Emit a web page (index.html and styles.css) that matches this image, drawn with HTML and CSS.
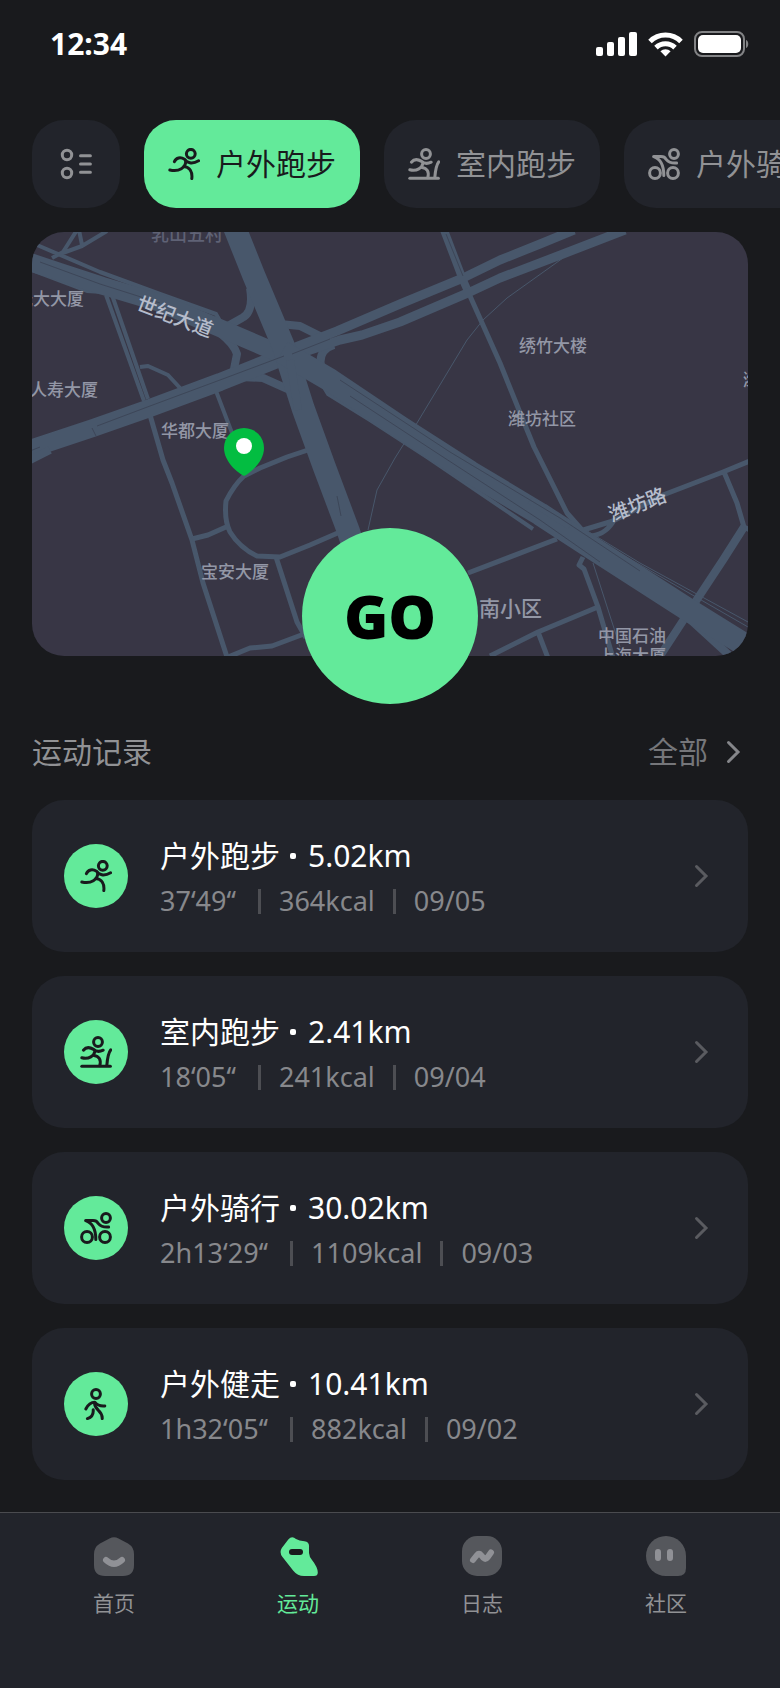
FILE: index.html
```html
<!DOCTYPE html>
<html lang="zh-CN">
<head>
<meta charset="utf-8">
<meta name="viewport" content="width=device-width, initial-scale=1">
<title>运动</title>
<link rel="stylesheet" href="styles.css">
</head>
<body>
<svg class="sprite" aria-hidden="true">
  <symbol id="i-run" viewBox="0 0 32 32">
    <circle cx="22.8" cy="5.8" r="4.4"/>
    <path d="M6.4 13.6C8.2 9.6 12.4 8.6 16.6 11.2C18.4 14.8 24 16.6 30.6 12.8"/>
    <path d="M17.8 13C17.6 19.6 11.4 24.2 1.8 22"/>
    <path d="M16 18.4C21.8 19.2 24.6 23.8 23.8 30.6"/>
  </symbol>
  <symbol id="i-treadmill" viewBox="0 0 32 32">
    <circle cx="18" cy="6" r="4.4"/>
    <path d="M3.4 14.2C6 11 10 11.2 13.6 13.4C16 15.6 19.8 15.8 23.2 14.2"/>
    <path d="M15 15C14.2 19.8 9 23.6 1.8 21.8"/>
    <path d="M14 19.4C19 20 21.4 23.8 19.8 29.6"/>
    <path d="M30.8 13.8C28.4 16.8 27.4 22 26.8 29.6"/>
    <path d="M1.8 30.2H30.4"/>
  </symbol>
  <symbol id="i-bike" viewBox="0 0 32 32">
    <circle cx="26" cy="6" r="4.4"/>
    <circle cx="7" cy="25" r="5.4"/>
    <circle cx="25" cy="25" r="5.4"/>
    <path d="M28.6 15C23.4 15.4 20.6 14.4 18.4 11.6C16.4 9 16 8.6 13 8.6H5.6C11.8 10.6 15.8 17 15.8 27.4"/>
  </symbol>
  <symbol id="i-walk" viewBox="0 0 32 32">
    <circle cx="16" cy="6" r="4.4"/>
    <path d="M5.8 21C8 16.6 11 14.2 14.8 14.2C17.4 17.6 20.4 18.4 24.8 18"/>
    <path d="M14.6 15.6C14.8 18.4 16.2 20.2 18.4 22.4C21.2 25 22.4 27 22.2 30.6"/>
    <path d="M13.2 21.8C13.6 26.4 11.6 29.4 7.4 30.6"/>
  </symbol>
  <symbol id="i-chevron" viewBox="0 0 24 24">
    <path d="M4.5 2.5L14 12L4.5 21.5"/>
  </symbol>
</svg>

<div class="app">
  <header class="status">
    <time class="clock">12:34</time>
    <div class="status-icons">
      <svg class="signal" viewBox="0 0 41 26" aria-hidden="true">
        <rect x="0" y="16" width="7" height="9" rx="2"/>
        <rect x="11" y="11" width="7" height="14" rx="2"/>
        <rect x="22" y="6" width="7" height="19" rx="2"/>
        <rect x="33" y="1" width="8" height="24" rx="2"/>
      </svg>
      <svg class="wifi" viewBox="0 0 35 26" aria-hidden="true">
        <path class="arc" d="M2 10.4A22 22 0 0 1 33 10.4"/>
        <path class="arc" d="M8 16.6A13.6 13.6 0 0 1 27 16.6"/>
        <path d="M17.5 25.6L12.4 20.2A7.5 7.5 0 0 1 22.6 20.2Z"/>
      </svg>
      <svg class="battery" viewBox="0 0 56 28" aria-hidden="true">
        <rect class="shell" x="1" y="2" width="49" height="24" rx="7"/>
        <rect x="4" y="5" width="43" height="18" rx="5"/>
        <path class="cap" d="M52 10C55 11 55 17 52 18Z"/>
      </svg>
    </div>
  </header>

  <nav class="tabs" aria-label="运动类型">
    <button class="tab tab-list" type="button" aria-label="全部类型">
      <svg class="icon" viewBox="0 0 32 32" aria-hidden="true">
        <circle cx="7" cy="7" r="4.7"/><circle cx="7" cy="25" r="4.7"/>
        <path d="M20.5 7.8H30.4M20.5 16H30.4M20.5 24.2H30.4"/>
      </svg>
    </button>
    <button class="tab tab-active" type="button"><svg class="icon" aria-hidden="true"><use href="#i-run"/></svg><span class="label">户外跑步</span></button>
    <button class="tab" type="button"><svg class="icon" aria-hidden="true"><use href="#i-treadmill"/></svg><span class="label">室内跑步</span></button>
    <button class="tab" type="button"><svg class="icon" aria-hidden="true"><use href="#i-bike"/></svg><span class="label">户外骑行</span></button>
  </nav>

  <main class="content">
    <section class="map-wrap" aria-label="地图">
      <svg class="map" viewBox="32 232 716 424" preserveAspectRatio="xMidYMid slice">
        <g class="roads">
          <path class="w1" d="M563 258L507 298L483 320L467 340L417 423L395 458L377 490L368 530M593 563L620 647M571 521L640 563L748 622M597 540L748 627"/>
          <path class="w4" d="M37 245L100 272L160 294L216 314L224 328M32 270L87 291L103 292M77 230L63 252L52 258M79 230L82 245M107 231L82 246L60 254M106 295L144 401M112 295L148 399"/>
          <path class="w4" d="M140 367L148 366L168 375L180 388M216 391L232 433M322 384L328 394L370 420L427 457L533 529"/>
          <path class="w5" d="M148 408L163 460L172 483L192 540L203 583L227 657"/>
          <path class="w5" d="M308 450L287 457L260 468L244 476Q234 485 226 501Q224 520 230 532Q240 548 257 556L280 557L310 545L340 532M192 539L208 535L226 527M276 557L297 622L306 638M228 657L250 648L272 646L304 634"/>
          <path class="w5" d="M468 573L557 539M580 531L613 521L663 495L723 472L750 461M588 536Q604 536 613 522M724 472L737 503L744 527L750 530M490 656L538 632L598 607M538 632L548 658M583 557L579 565L584 569L598 607L613 658"/>
          <path class="w5" d="M470 296L500 363L523 420L534 447L567 513L582 530"/>
          <path class="w8" d="M444 230L463 280L470 296M250 288Q254 312 242 318L226 327M220 333Q234 344 237 354L233 374M280 324L300 326L320 336M334 345Q318 350 321 366M240 377L263 378L292 391M744 527L723 560L690 610L660 656M682 612L730 656"/>
          <path class="w9" d="M280 353L337 331L400 304L463 278L500 260L540 244L574 230M290 357L340 340L362 335L400 322L470 292L500 278L563 254L625 230"/>
          <path class="w18" d="M30 449L93 428L150 408L220 382L290 354"/>
          <path class="w18" d="M30 262L60 272L103 286L160 303L222 329L285 356"/>
          <path class="w23" d="M234 226L254 276L283 345L303 408L324 466L348 530L360 566"/>
          <path class="w23" d="M282 352L330 380L400 427L470 472L540 514L600 553L687 609L750 648"/>
          <path class="w8" d="M30 460L50 450M530 500L570 526M290 360L298 410"/>
        </g>
        <path class="seams" d="M40 262L100 284L160 303M97 426L150 406L220 380L284 356M292 354L330 339M340 380L450 452L560 518L640 571M350 396L440 455L540 520L600 562M446 234L463 276M337 496L341 516M30 451L40 447M92 428L96 436"/>
        <g class="labels">
          <text class="faint" x="151" y="241">乳山五村</text>
          <text x="84" y="305" text-anchor="end">光大大厦</text>
          <text x="98" y="396" text-anchor="end">人寿大厦</text>
          <text x="161" y="437">华都大厦</text>
          <text x="519" y="352">绣竹大楼</text>
          <text x="508" y="425">潍坊社区</text>
          <text x="743" y="386">潍坊</text>
          <text x="201" y="578">宝安大厦</text>
          <text x="598" y="642">中国石油</text>
          <text x="598" y="662">上海大厦</text>
          <text class="large" x="479" y="616">南小区</text>
          <text class="road" transform="translate(135 309) rotate(21)">世纪大道</text>
          <text class="road" transform="translate(612 522) rotate(-21)">潍坊路</text>
        </g>
        <path class="pin" d="M244 476C238 473 224 462 224 448A20 20 0 0 1 264 448C264 462 250 473 244 476Z"/>
        <circle class="pin-dot" cx="244" cy="446" r="8"/>
      </svg>
      <button class="go" type="button">GO</button>
    </section>

    <section class="records">
      <div class="records-head">
        <h2 class="records-title label">运动记录</h2>
        <a class="records-all" href="#all"><span class="label">全部</span><svg class="chevron" aria-hidden="true"><use href="#i-chevron"/></svg></a>
      </div>
      <a class="card" href="#r1">
        <span class="badge"><svg class="icon" aria-hidden="true"><use href="#i-run"/></svg></span>
        <span class="info">
          <span class="name">户外跑步<i class="dot"></i>5.02km</span>
          <span class="meta"><span class="duration">37‘49‘‘</span><i class="bar"></i><span>364kcal</span><i class="bar"></i><span>09/05</span></span>
        </span>
        <svg class="chevron" aria-hidden="true"><use href="#i-chevron"/></svg>
      </a>
      <a class="card" href="#r2">
        <span class="badge"><svg class="icon" aria-hidden="true"><use href="#i-treadmill"/></svg></span>
        <span class="info">
          <span class="name">室内跑步<i class="dot"></i>2.41km</span>
          <span class="meta"><span class="duration">18‘05‘‘</span><i class="bar"></i><span>241kcal</span><i class="bar"></i><span>09/04</span></span>
        </span>
        <svg class="chevron" aria-hidden="true"><use href="#i-chevron"/></svg>
      </a>
      <a class="card" href="#r3">
        <span class="badge"><svg class="icon" aria-hidden="true"><use href="#i-bike"/></svg></span>
        <span class="info">
          <span class="name">户外骑行<i class="dot"></i>30.02km</span>
          <span class="meta"><span class="duration">2h13‘29‘‘</span><i class="bar"></i><span>1109kcal</span><i class="bar"></i><span>09/03</span></span>
        </span>
        <svg class="chevron" aria-hidden="true"><use href="#i-chevron"/></svg>
      </a>
      <a class="card" href="#r4">
        <span class="badge"><svg class="icon" aria-hidden="true"><use href="#i-walk"/></svg></span>
        <span class="info">
          <span class="name">户外健走<i class="dot"></i>10.41km</span>
          <span class="meta"><span class="duration">1h32‘05‘‘</span><i class="bar"></i><span>882kcal</span><i class="bar"></i><span>09/02</span></span>
        </span>
        <svg class="chevron" aria-hidden="true"><use href="#i-chevron"/></svg>
      </a>
    </section>
  </main>

  <nav class="tabbar" aria-label="主导航">
    <a class="nav" href="#home">
      <svg class="nav-icon" viewBox="0 0 40 40" aria-hidden="true">
        <path class="shape" d="M15.5 2.4Q20 0 24.5 2.4L34 7.4Q40 11 40 18V29Q40 40 29 40H11Q0 40 0 29V18Q0 11 6 7.4Z"/>
        <path class="line" d="M12 24Q20 31.5 28 24"/>
      </svg>首页</a>
    <a class="nav nav-active" href="#sport" aria-current="page">
      <svg class="nav-icon" viewBox="0 0 40 40" aria-hidden="true">
        <path class="shape" d="M10.3 3.4Q14 -0.6 18 3Q21 5 26.5 5.3Q31.6 6 31 11V17Q31.2 20.5 34 24Q39.6 31 39.8 36.5Q39.8 40 36 40H26Q19.5 40 15.3 34.7L4.5 21Q1 16.5 3.8 12Z"/>
        <rect class="slot" x="11" y="13" width="14" height="6" rx="3"/>
      </svg>运动</a>
    <a class="nav" href="#log">
      <svg class="nav-icon" viewBox="0 0 40 40" aria-hidden="true">
        <rect class="shape" width="40" height="40" rx="15"/>
        <path class="line" d="M11 24L15 19Q17 16.5 19 19L21.5 22Q23.5 24 25.5 21.5L29 16.5"/>
      </svg>日志</a>
    <a class="nav" href="#community">
      <svg class="nav-icon" viewBox="0 0 40 40" aria-hidden="true">
        <path class="shape" d="M20 0A20 20 0 0 1 40 20V32Q40 40 32 40H20A20 20 0 0 1 20 0Z"/>
        <path class="line" d="M12 16V22M24 16V22"/>
      </svg>社区</a>
  </nav>
</div>
</body>
</html>
```

FILE: styles.css
```css
* { box-sizing: border-box; }

body {
  margin: 0;
  background: #191a1d;
  color: #fff;
  font-family: "Noto Sans", "Noto Sans CJK SC", sans-serif;
}

a { color: inherit; text-decoration: none; }
button { border: 0; margin: 0; font: inherit; cursor: pointer; }
svg { display: block; flex: none; }

.sprite { position: absolute; width: 0; height: 0; }

.app {
  display: flex;
  flex-direction: column;
  min-height: 100vh;
}

.icon {
  width: 32px;
  height: 32px;
  fill: none;
  stroke: currentColor;
  stroke-width: 3;
  stroke-linecap: round;
  stroke-linejoin: round;
  overflow: visible;
}

.chevron {
  width: 24px;
  height: 24px;
  fill: none;
  stroke: currentColor;
  stroke-width: 3;
  stroke-linecap: round;
}

.label { padding-bottom: 4px; }

/* Status bar */
.status {
  display: flex;
  align-items: center;
  justify-content: space-between;
  height: 88px;
  padding: 0 30px 0 50px;
}
.clock { font-size: 30px; font-weight: 700; line-height: 40px; }
.status-icons { display: flex; align-items: center; gap: 11px; fill: #fff; }
.signal { width: 41px; height: 26px; }
.wifi { width: 35px; height: 26px; }
.wifi .arc { fill: none; stroke: #fff; stroke-width: 5; }
.battery { width: 56px; height: 28px; }
.battery .shell { fill: none; stroke: #828385; stroke-width: 2; }
.battery .cap { fill: #828385; }

/* Activity type tabs */
.tabs {
  display: flex;
  gap: 24px;
  padding: 32px 0 24px 32px;
  overflow: hidden;
}
.tab {
  display: flex;
  flex: none;
  align-items: center;
  gap: 16px;
  height: 88px;
  padding: 0 24px;
  border-radius: 32px;
  background: #22242b;
  color: #919295;
  font-size: 30px;
  white-space: nowrap;
}
.tab-list { padding: 0 28px; }
.tab-active { background: #63ea9a; color: #191a1d; }

/* Map */
.content { flex: 1; padding: 0 32px 32px; }
.map-wrap {
  position: relative;
  padding-bottom: 48px;
}
.map {
  width: 100%;
  height: 424px;
  border-radius: 32px;
  background: #383645;
}
.roads { fill: none; stroke: #48576b; stroke-linejoin: round; }
.w1 { stroke-width: 1; }
.w4 { stroke-width: 4; }
.w5 { stroke-width: 5; }
.w8 { stroke-width: 8; }
.w9 { stroke-width: 9; }
.w18 { stroke-width: 18; }
.w23 { stroke-width: 23; }
.seams { fill: none; stroke: #3d4658; stroke-width: 1; }
.labels { fill: #9397a6; font-size: 17px; font-weight: 500; }
.labels .faint { fill: #5f6275; font-size: 18px; }
.labels .large { font-size: 21px; }
.labels .road { fill: #b5bccb; font-size: 20px; }
.pin { fill: #03bd41; }
.pin-dot { fill: #fff; }
.go {
  position: absolute;
  bottom: 0;
  left: 50%;
  width: 176px;
  height: 176px;
  margin-left: -88px;
  padding: 0;
  border-radius: 50%;
  background: #63ea9a;
  color: #000;
  font-size: 60px;
  font-weight: 900;
  line-height: 176px;
}

/* Records */
.records {
  display: flex;
  flex-direction: column;
  gap: 24px;
  padding-top: 24px;
}
.records-head {
  display: flex;
  align-items: center;
  justify-content: space-between;
  height: 48px;
  color: #919295;
  font-size: 30px;
}
.records-title { margin: 0; font-size: 30px; font-weight: 400; }
.records-all {
  display: flex;
  align-items: center;
  gap: 16px;
  color: #75767a;
}
.card {
  display: flex;
  align-items: center;
  gap: 32px;
  min-height: 152px;
  padding: 24px 32px;
  border-radius: 32px;
  background: #22242b;
}
.card .chevron { color: #5a5b60; }
.records-all .chevron { color: #85868a; }
.badge {
  display: flex;
  flex: none;
  align-items: center;
  justify-content: center;
  width: 64px;
  height: 64px;
  border-radius: 50%;
  background: #63ea9a;
  color: #191a1d;
}
.info { flex: 1; min-width: 0; padding-top: 2px; }
.name {
  display: flex;
  align-items: center;
  font-size: 30px;
  line-height: 46px;
  padding-bottom: 2px;
}
.dot {
  width: 6px;
  height: 6px;
  margin: 0 12px 0 10px;
  border-radius: 2px;
  background: #fff;
}
.meta {
  display: flex;
  align-items: center;
  color: #87888c;
  font-size: 27px;
  font-kerning: none;
  line-height: 40px;
}
.duration { padding-right: 4px; }
.bar {
  width: 3px;
  height: 25px;
  margin: 0 18px;
  background: #4d4e53;
}

/* Bottom navigation */
.tabbar {
  display: flex;
  height: 177px;
  padding: 23px 22px 0;
  border-top: 1px solid #4a4b4f;
  background: #22242b;
}
.nav {
  display: flex;
  flex: 1;
  flex-direction: column;
  align-items: center;
  gap: 11px;
  color: #919295;
  font-size: 21px;
  line-height: 32px;
}
.nav-icon { width: 40px; height: 40px; }
.shape { fill: #55575c; }
.line { fill: none; stroke: #909196; stroke-width: 6; stroke-linecap: round; }
.slot { fill: #191a1d; }
.nav-active { color: #63ea9a; }
.nav-active .shape { fill: #63ea9a; }
```
